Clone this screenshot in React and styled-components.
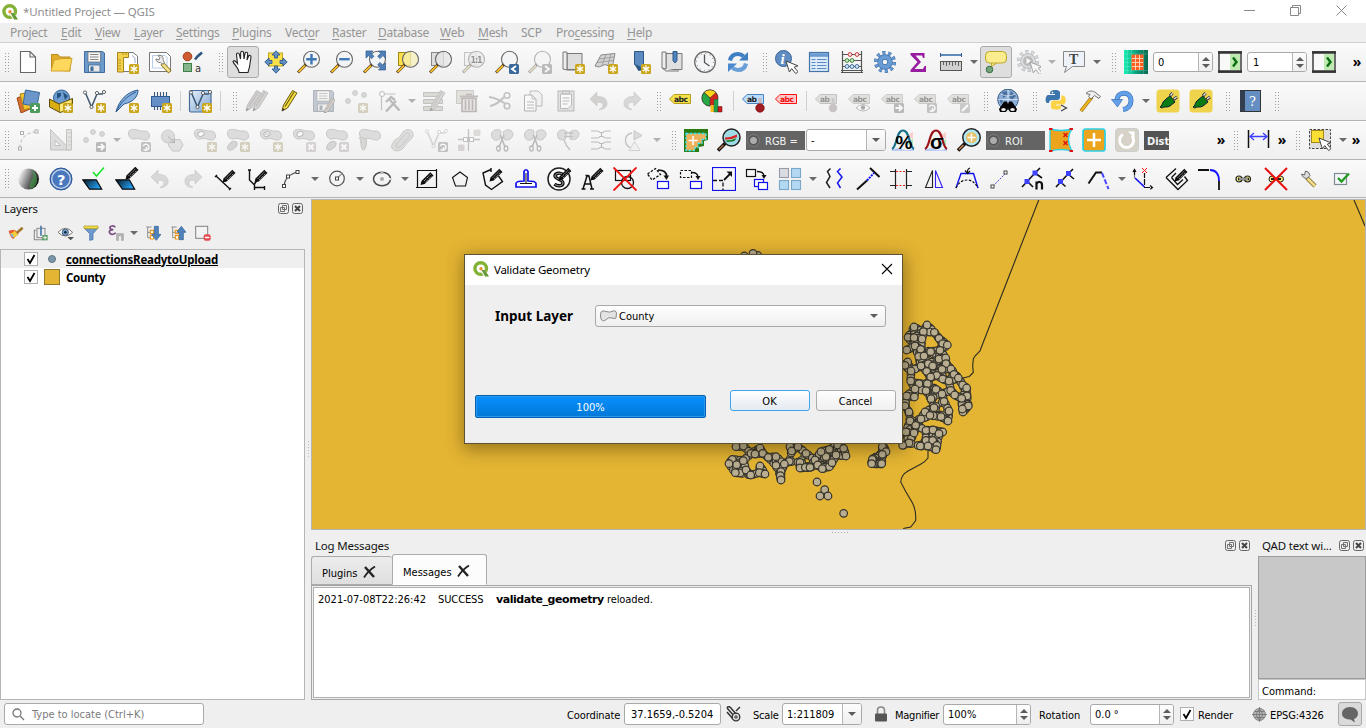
import React from "react";
import styled, { createGlobalStyle, css } from "styled-components";

const GlobalStyle = createGlobalStyle`
  * { box-sizing: border-box; }
  body { margin: 0; background: #efefef; overflow: hidden; }
`;

const ui = `"Noto Sans", "Open Sans", sans-serif`;
const dense = `"DejaVu Sans Condensed", "DejaVu Sans", "Noto Sans", sans-serif`;

const Window = styled.div`
  width: 1366px;
  height: 728px;
  display: flex;
  flex-direction: column;
  background: #efefef;
  font-family: ${ui};
  font-size: 12px;
  color: #000;
  position: relative;
  overflow: hidden;
  white-space: nowrap;
`;

const TitleBar = styled.header`
  height: 23px;
  background: #fff;
  display: flex;
  align-items: center;
  color: #8f8f8f;
  font-size: 11.5px;
  letter-spacing: -0.15px;
`;
const AppIcon = styled.span`
  display: flex;
  width: 16px;
  height: 16px;
  margin: 0 5px 0 2px;
`;
const WindowButtons = styled.div`
  margin-left: auto;
  display: flex;
  width: 122px;
  justify-content: space-between;
  padding: 0 19px 2px 0;
`;

const MenuBar = styled.nav`
  height: 20px;
  display: flex;
  align-items: center;
  padding-left: 10px;
  border-bottom: 1px solid #d0d0d0;
  color: #959595;
  font-size: 12px;
`;
const MenuItem = styled.span`
  width: ${(p) => p.$w}px;
  letter-spacing: -0.27px;
  u { text-underline-offset: 2px; }
`;

const Toolbar = styled.div`
  height: ${(p) => p.$h || 39}px;
  display: flex;
  align-items: center;
  background: linear-gradient(#fafafa, #efefef);
  border-bottom: 1px solid #b4b4b4;
  flex-shrink: 0;
`;
const Tool = styled.span`
  width: ${(p) => p.$w || 33}px;
  height: 32px;
  padding-right: ${(p) => (p.$w ? 0 : 1)}px;
  display: flex;
  align-items: center;
  justify-content: center;
  flex-shrink: 0;
  svg { opacity: ${(p) => (p.$dim ? 0.46 : 1)}; filter: ${(p) => (p.$dim ? "grayscale(.7)" : "none")}; }
  ${(p) =>
    p.$on &&
    css`
      border: 1px solid #aaa;
      border-radius: 3px;
      background: #dedede;
      width: 32px;
      padding: 0;
      margin-right: 1px;
    `}
`;
const Grip = styled.span`
  width: ${(p) => p.$w || 12}px;
  padding-left: ${(p) => p.$l || 5}px;
  flex-shrink: 0;
  display: flex;
`;
const GripDots = styled.i`
  width: 4px;
  height: 19px;
  background: radial-gradient(circle at 0.5px 0.5px, #9f9f9f 0.55px, transparent 0.6px) 0 0 / 3px 3px;
`;
const Divider = styled.i`
  width: 1px;
  height: 20px;
  background: #cfcfcf;
  margin: 0 3px;
  flex-shrink: 0;
`;
const Drop = styled.span`
  width: 12px;
  display: flex;
  justify-content: center;
  flex-shrink: 0;
  &::after {
    content: "";
    border: 4px solid transparent;
    border-top-color: ${(p) => (p.$dim ? "#b0b0b0" : "#6a6a6a")};
    border-bottom: 0;
  }
`;
const More = styled.span`
  width: ${(p) => p.$w}px;
  padding-left: ${(p) => p.$l || 0}px;
  text-align: center;
  font: bold 14px ${ui};
  line-height: 16px;
  flex-shrink: 0;
`;
const Gap = styled.span`
  width: ${(p) => p.$w}px;
  flex-shrink: 0;
`;

const Field = styled.div`
  width: ${(p) => p.$w}px;
  height: ${(p) => p.$h || 20}px;
  margin-right: ${(p) => p.$mr || 0}px;
  border: 1px solid #a9a9a9;
  border-radius: 3px;
  background: #fff;
  display: flex;
  align-items: center;
  justify-content: space-between;
  padding-left: ${(p) => p.$pl || 4}px;
  font: 11px ${dense};
  flex-shrink: 0;
  overflow: hidden;
`;
const FieldText = styled.span`
  padding-top: 1px;
`;
const Spin = styled.span`
  width: 14px;
  height: 100%;
  border-left: 1px solid #b5b5b5;
  background: linear-gradient(#fdfdfd, #eee);
  display: flex;
  flex-direction: column;
  justify-content: center;
  align-items: center;
  gap: 3px;
  &::before, &::after { content: ""; border: 4px solid transparent; }
  &::before { border-bottom: 4px solid #5c5c5c; border-top: 0; }
  &::after { border-top: 4px solid #5c5c5c; border-bottom: 0; }
`;
const Arrow = styled.span`
  width: ${(p) => p.$w || 19}px;
  height: 100%;
  border-left: ${(p) => (p.$plain ? "0" : "1px solid #b5b5b5")};
  background: ${(p) => (p.$plain ? "none" : "linear-gradient(#fdfdfd,#eee)")};
  display: flex;
  align-items: center;
  justify-content: center;
  &::after { content: ""; border: 4px solid transparent; border-top: 4px solid #5c5c5c; border-bottom: 0; }
`;
const DarkLabel = styled.span`
  width: ${(p) => p.$w}px;
  height: 19px;
  margin-right: ${(p) => p.$mr || 0}px;
  background: ${(p) => (p.$bold ? "#545454" : "#646464")};
  color: #f4f4f4;
  display: flex;
  align-items: center;
  gap: 5px;
  padding: 2px 0 0 ${(p) => (p.$bold ? 3 : 1)}px;
  font: ${(p) => (p.$bold ? "bold 11px" : "11px")} ${dense};
  overflow: hidden;
  flex-shrink: 0;
`;
const Bullet = styled.i`
  width: 13px;
  height: 13px;
  margin-bottom: 2px;
  border-radius: 50%;
  border: 1px solid #7e7e7e;
  background: radial-gradient(circle, #acacac 3px, #585858 4px);
`;

const Workspace = styled.main`
  height: 502px;
  display: flex;
`;
const LayersDock = styled.section`
  width: 305px;
  display: flex;
  flex-direction: column;
`;
const DockTitle = styled.div`
  height: ${(p) => p.$h || 21}px;
  padding: 0 0 ${(p) => p.$pb || 0}px 4px;
  display: flex;
  align-items: center;
  justify-content: space-between;
  font-size: 11.5px;
  letter-spacing: -0.2px;
  color: #111;
`;
const DockButtons = styled.span`
  display: flex;
  gap: 3px;
  padding-right: ${(p) => p.$r || 0}px;
`;
const LayerTools = styled.div`
  height: 30px;
  display: flex;
  align-items: center;
  padding: 0 0 2px 3px;
`;
const Tree = styled.div`
  flex: 1;
  border: 1px solid #b5b5b5;
  background: #fff;
`;
const TreeRow = styled.div`
  height: 18px;
  display: flex;
  align-items: center;
  padding-left: 23px;
  background: ${(p) => (p.$hot ? "#efefef" : "#fff")};
  font: bold 11.5px ${ui};
  letter-spacing: ${(p) => p.$ls}px;
  text-decoration: ${(p) => (p.$hot ? "underline" : "none")};
`;
const Check = styled.span`
  width: 14px;
  height: 14px;
  border: 1px solid #b0b0b0;
  background: #fff;
  display: flex;
  align-items: center;
  justify-content: center;
  flex-shrink: 0;
`;
const Symbol = styled.span`
  width: 28px;
  display: flex;
  justify-content: center;
`;
const Swatch = styled.i`
  width: 16px;
  height: 16px;
  background: #e4b533;
  border: 1px solid #93792e;
`;
const PointMark = styled.i`
  width: 8px;
  height: 8px;
  border-radius: 50%;
  background: #7b98a8;
  border: 1px solid #5f7683;
`;
const Splitter = styled.div`
  width: 6px;
  display: flex;
  align-items: center;
  justify-content: center;
  &::after { content: ""; width: 1px; height: 17px; background: repeating-linear-gradient(#bbb 0 1px, transparent 1px 3px); }
`;
const Center = styled.div`
  flex: 1;
  display: flex;
  flex-direction: column;
  padding-top: 1px;
`;
const MapPane = styled.div`
  height: 331px;
  border: 1px solid #b5b5b5;
  background: #e4b533;
  svg { display: block; }
`;
const HSplit = styled.div`
  height: 6px;
  display: flex;
  justify-content: center;
  padding: 2px 0 0 3px;
  &::after { content: ""; width: 17px; height: 1px; background: repeating-linear-gradient(90deg, #aaa 0 1px, transparent 1px 3px); }
`;
const BottomDocks = styled.div`
  flex: 1;
  display: flex;
`;
const LogDock = styled.section`
  width: 941px;
  display: flex;
  flex-direction: column;
`;
const Tabs = styled.div`
  height: 30px;
  display: flex;
  align-items: flex-end;
  font: 11px ${dense};
`;
const Tab = styled.span`
  width: ${(p) => p.$w}px;
  height: ${(p) => (p.$active ? 31 : 29)}px;
  border: 1px solid #ababab;
  border-bottom-color: ${(p) => (p.$active ? "#fff" : "#ababab")};
  border-right-width: ${(p) => (p.$active ? 1 : 0)}px;
  border-radius: 3px 3px 0 0;
  background: ${(p) => (p.$active ? "#fcfcfc" : "linear-gradient(#ececec,#dfdfdf)")};
  display: flex;
  align-items: center;
  justify-content: space-between;
  padding: 5px 16px 0 10px;
  svg { margin-bottom: 3px; }
`;
const LogBox = styled.div`
  flex: 1;
  border: 1px solid #a5a5a5;
  padding: 1px;
`;
const LogInner = styled.div`
  height: 100%;
  border: 1px solid #b0b0b0;
  background: #fff;
  padding: 5px 4px;
  font: 11px ${dense};
  display: flex;
  align-items: flex-start;
`;
const LogPart = styled.span`
  width: ${(p) => p.$w}px;
  letter-spacing: ${(p) => p.$ls || 0}px;
  ${(p) => p.$bold && css`font-family: "DejaVu Sans", sans-serif; font-weight: 700;`}
`;
const QadDock = styled.section`
  width: 108px;
  display: flex;
  flex-direction: column;
`;
const QadOutput = styled.div`
  height: 123px;
  background: #c8c8c8;
  border: 1px solid #9c9c9c;
`;
const QadInput = styled.div`
  flex: 1;
  background: #fff;
  border: 1px solid #c6c6c6;
  font: 11px ${dense};
  padding: 5px 3px 0;
`;

const StatusBar = styled.footer`
  height: 28px;
  display: flex;
  align-items: center;
  padding-left: 4px;
  font: 11px ${dense};
`;
const StatusCell = styled.span`
  width: ${(p) => p.$w}px;
  display: flex;
  align-items: center;
  flex-shrink: 0;
  padding-top: 2px;
  letter-spacing: ${(p) => p.$ls || 0}px;
  svg { margin-bottom: 2px; }
`;
const Locator = styled(Field)`
  justify-content: flex-start;
  gap: 7px;
  color: #7b7b7b;
  padding-left: 7px;
`;
const Bubble = styled.span`
  width: 24px;
  height: 24px;
  border: 1px solid #a8a8a8;
  border-radius: 3px;
  background: #dadada;
  display: flex;
  align-items: center;
  justify-content: center;
`;

const Dialog = styled.div`
  position: absolute;
  left: 464px;
  top: 254px;
  width: 439px;
  height: 190px;
  border: 1px solid #5d5233;
  background: #efefef;
  box-shadow: 1px 4px 16px 2px rgba(50, 35, 0, 0.42);
`;
const DialogTitle = styled.div`
  height: 30px;
  background: #fff;
  display: flex;
  align-items: center;
  justify-content: space-between;
  padding: 0 9px 2px 8px;
  font-size: 11.5px;
  letter-spacing: -0.25px;
`;
const DialogCaption = styled.span`
  display: flex;
  align-items: center;
  gap: 5px;
`;
const DialogRow = styled.div`
  display: flex;
  align-items: center;
  padding: 20px 0 0 30px;
`;
const InputLabel = styled.b`
  width: 100px;
  font: bold 13.5px ${ui};
`;
const LayerCombo = styled(Field)`
  background: linear-gradient(#fefefe, #efefef);
`;
const ComboValue = styled.span`
  display: flex;
  align-items: center;
  gap: 2px;
`;
const DialogFooter = styled.div`
  display: flex;
  align-items: flex-start;
  padding: 63px 0 0 10px;
  font: 11px ${dense};
`;
const Progress = styled.div`
  width: 231px;
  height: 23px;
  margin: 5px 24px 0 0;
  padding-top: 2px;
  border: 1px solid #0560ae;
  border-radius: 2px;
  background: linear-gradient(#0a90ff, #0078d7);
  box-shadow: inset 0 0 0 1px #2c98f0;
  color: #fff;
  display: flex;
  align-items: center;
  justify-content: center;
`;
const Button = styled.button`
  width: 80px;
  height: 21px;
  margin-right: 6px;
  padding: 2px 1px 0 0;
  border: 1px solid ${(p) => (p.$primary ? "#3ea4ee" : "#acacac")};
  border-radius: 3px;
  background: linear-gradient(#fefefe, ${(p) => (p.$primary ? "#e3eaf1" : "#efefef")});
  font: inherit;
`;

/* ---------- icon building blocks ---------- */
const Svg = ({ s = 24, v = 24, children }) => (
  <svg width={s} height={s} viewBox={`0 0 ${v} ${v}`} fill="none">{children}</svg>
);
const Badge = ({ c = "#c9a61c", x = 14, y = 14, children }) => (
  <g transform={`translate(${x} ${y})`}>
    <rect width="10" height="10" rx="1.5" fill={c} />
    {children || <path d="M5 1.3v7.4M1.8 3.1l6.4 3.8M8.2 3.1L1.8 6.9" stroke="#fff" strokeWidth="1.3" />}
  </g>
);
const ArrowBadge = () => <Badge c="#777"><path d="M1.5 5h6M5 2l3 3-3 3" stroke="#fff" strokeWidth="1.8" /></Badge>;
const TurnBadge = () => <Badge c="#888"><path d="M3 7.5A3 3 0 1 0 2.2 4M2.5 8h3V5" stroke="#fff" strokeWidth="1.5" /></Badge>;
const CrossBadge = () => <Badge c="#c9a2aa"><path d="M2.5 2.5l5 5M7.5 2.5l-5 5" stroke="#fff" strokeWidth="2" /></Badge>;
const Lens = ({ cx = 14.5, cy = 9.2, fill = "#f1f3f5" }) => (
  <g>
    <circle cx={cx} cy={cy} r="8" fill={fill} fillOpacity=".75" stroke="#666" strokeWidth="1.1" />
    <path d="M8.8 14.8L1 22.5" stroke="#4a3a1a" strokeWidth="3" />
    <path d="M8 15.7L1.6 22" stroke="#f8c12d" strokeWidth="1.8" />
  </g>
);
const Blob = () => (
  <path d="M1.5 6C1 2 4 1 8 1.5s6 2 9 1.5 5.500 1.500 5.500 5-3 5-7 3.500-5.500-1-8.500-.5S2 9 1.500 6z" fill="#b9c0b9" stroke="#909090" strokeWidth="1" />
);
const Hole = () => <ellipse cx="8" cy="6" rx="3.2" ry="2.3" transform="rotate(-20 8 6)" fill="#fff" stroke="#777" />;
const Tear = () => <path d="M1.5 20c1-5 5-8 9-6 2 2-1 6-4 7.5s-5 .5-5-1.5z" fill="#aeb5ae" stroke="#888" />;
const Tag = ({ fill = "#f3e04b", stroke = "#b69d1d", color = "#222", t = "abc" }) => (
  <g>
    <path d="M1.5 10L6 5.5h16.500v9H6z" fill={fill} stroke={stroke} />
    <text x="6" y="12.8" fontFamily="DejaVu Sans" fontWeight="700" fontSize="7.6" fill={color} textLength={t === "abc" ? 14 : 10}>{t}</text>
  </g>
);
const Vee = ({ c = "#3f5870", o = "#555" }) => (
  <g>
    <path d="M3.5 4L9.5 18 15 5h6" stroke={c} strokeWidth="1.5" />
    {[[3, 3.5], [9.5, 18], [15, 4], [22, 3]].map(([x, y]) => <circle key={x} cx={x} cy={y} r="1.6" fill="#fff" stroke={o} strokeWidth=".9" />)}
  </g>
);
const Dots = () => (
  <g fill="#b9b9b9" stroke="#909090">
    <circle cx="4" cy="12" r="2.4" /><circle cx="11" cy="4" r="2.4" /><circle cx="20" cy="6" r="2.4" />
  </g>
);
const Pen = ({ x = 0, y = 0, k = 1, a = "#f3dc3e", b = "#6b5a14" }) => (
  <g transform={`translate(${x} ${y}) scale(${k})`}>
    <path d="M4 22l1.5-6L14.5 1.500l4.500 2.500L9.500 19z" fill={a} stroke={b} strokeWidth="1" />
    <path d="M4 22l.8-3 2.2 1.500z" fill="#333" /><path d="M7 17.500L16 3" stroke={b} strokeWidth="1.1" />
  </g>
);
const InkPen = ({ x = 11, y = 1 }) => (
  <g transform={`translate(${x} ${y})`}>
    <path d="M-.5 12.500l1-4 8.800-8.800 3.200 3.200L3.700 11.500z" fill="#0c0c0c" />
    <path d="M2.800 8.600l6.800-6.800M4.400 9.800l6.400-6.400" stroke="#fff" strokeWidth=".8" strokeDasharray="1.2 1" />
  </g>
);
const Disk = () => (
  <g>
    <path d="M2.500 1.500h18L22.500 3v19.500h-20z" fill="#6b9bcd" stroke="#3f6d9d" />
    <rect x="6" y="2" width="12.500" height="10" fill="#f7f7f7" stroke="#666" strokeWidth=".7" />
    <path d="M8 4.500h8.500M8 7h8.500M8 9.500h8.500" stroke="#888" strokeWidth="1" />
    <rect x="6.500" y="15" width="11.500" height="7" fill="#e9e9e9" stroke="#446a92" strokeWidth=".8" />
    <rect x="8.500" y="16.500" width="3" height="4.500" fill="#3f6d9d" />
  </g>
);
const Hook = ({ flip, c = "#b2b8b0" }) => (
  <g transform={flip ? "translate(24 0) scale(-1 1)" : undefined}>
    <path d="M3 10l7-7v4.500c7 0 10 2.500 10 7 0 3.500-3 6-8 6 2.500-1 4-2.500 4-4.500 0-2-2-3-6-2.500V17z" fill={c} stroke="#999" strokeWidth=".8" />
  </g>
);
const Node = ({ x, y }) => <rect x={x - 1.5} y={y - 1.5} width="3" height="3" fill="#fff" stroke="#444" strokeWidth="1" />;
const Gear = ({ c = "#6a9bd3" }) => (
  <g>
    <circle cx="12" cy="12" r="9" stroke="#3f70aa" strokeWidth="4.2" strokeDasharray="3 2.654" />
    <circle cx="12" cy="12" r="8.8" stroke={c} strokeWidth="3.4" strokeDasharray="2.2 3.329" strokeDashoffset="-.4" />
    <circle cx="12" cy="12" r="5" stroke="#3f70aa" strokeWidth="5.4" /><circle cx="12" cy="12" r="5" stroke={c} strokeWidth="4.2" />
  </g>
);
const Cursor = ({ x = 11, y = 10 }) => (
  <path transform={`translate(${x} ${y})`} d="M0 0l3.400 11 2.300-3.400 4 5 2.300-2-3.800-4.400 3.700-1.400z" fill="#fff" stroke="#444" />
);
const Slab = () => (
  <g>
    <defs><linearGradient id="slab" x1="0" y1="0" x2="1" y2=".5"><stop offset=".1" stopColor="#0a2438" /><stop offset="1" stopColor="#23a0f2" /></linearGradient></defs>
    <path d="M.8 12.800h13.500l5.400 9.400H7.500z" fill="url(#slab)" stroke="#0a0a0a" strokeWidth="1.2" />
  </g>
);
const Hist = ({ c, t }) => (
  <g>
    <path d="M3 20C7 20 6 3 12 3s6 15 10 18z" fill="#eef4f0" />
    <path d="M14 16l8-5v6z" fill="#a8e8b8" /><path d="M15 8l7-4v7z" fill="#fbd0cc" /><path d="M0 23q6-5 11-2t12-1v3z" fill="#b9cdfb" />
    <path d="M1 21C6 19 5 2.500 12 2.500S18 19 23 21" stroke={c} strokeWidth="2.2" />
    <text x={t === "%" ? 4.5 : 6} y="21" fontFamily="Liberation Sans" fontWeight="700" fontSize={t === "%" ? 19 : 20} fill="#000">{t}</text>
  </g>
);
const Plug = () => (
  <g>
    <rect x=".5" y=".5" width="23" height="23" rx="3.5" fill="#efd34d" />
    <path d="M4 18c2-1 2-3 3-5l3-3 4-3 5 6-5 4c-3 2-6 0-8 2z" fill="#0a7a12" stroke="#123" />
    <path d="M14 7l2.500-3M17.500 10.500L21 8" stroke="#333" strokeWidth="3" /><path d="M14.500 6.500l2-2.300M18 10l2.600-1.900" stroke="#ddd" strokeWidth="1.5" />
  </g>
);
const Land = () => (
  <g>
    <rect x="1" y="2" width="22" height="20" fill="#f8f8f8" stroke="#333" strokeWidth="1.4" />
    <path d="M0 2.500h24M0 21.500h24" stroke="#333" strokeWidth="2.6" />
    <rect x="12" y="4" width="10" height="16" fill="#bfe9b0" /><path d="M15 7.500l3.500 4.500-3.500 4.500" stroke="#0a6e12" strokeWidth="2.4" />
  </g>
);

const icons = {
  new: <path d="M4.500 1.500H14l5.500 5.500v15.500h-15zM14 1.500V7h5.500" fill="#fff" stroke="#666" strokeWidth="1.1" />,
  open: <g><path d="M2.500 20V4.500H9l2 2.500h10v14z" fill="#e0ae2c" stroke="#b98c1b" /><path d="M2 21L5 10l8-1.500h10L20.500 21z" fill="#fed75d" stroke="#d2a028" /></g>,
  save: <Disk />,
  layout: <g><path d="M3.500 2.500H18l4.500 3.500v15.500h-19z" fill="#fff" stroke="#777" /><path d="M2.500 2.500h11v5h-5V22h-6z" fill="#f3d24b" stroke="#a8841a" /><path d="M8 3v2M11 3v2M3.500 10h2.500M3.500 13h2.500M3.500 16h2.500M3.500 19h2.500" stroke="#a8841a" strokeWidth=".9" /><path d="M17 5.500l3 2.500v5" stroke="#9ac" /><Badge /></g>,
  layouts: <g><path d="M1.500 2.500h17l4 4v15h-21z" fill="#fff" stroke="#777" /><path d="M4.500 5.500H17l2 2V18H4.500z" stroke="#b8cdea" /><path d="M14 13.500l8 8.500" stroke="#8a6d14" strokeWidth="4.2" /><path d="M14.500 14l7 7.500" stroke="#f3e08a" strokeWidth="2.6" /><path d="M10 5.500c3-1 5.500 1 5 4 .5 2 2 3 1 4s-2.500 0-3.500-1C10 13 8 11 8 9l3 .8 1-2z" fill="#eee" stroke="#777" /></g>,
  style: <g><circle cx="6.500" cy="6.500" r="4.300" fill="#cf5b31" stroke="#9d3d1d" /><rect x="2.500" y="13.500" width="8" height="8" fill="#86b58c" stroke="#3c8048" /><path d="M14 9.500l2.500-3L21 2.500" stroke="#2f5680" strokeWidth="2.600" /><text x="14" y="21.500" fontSize="10" fontFamily="DejaVu Sans" fill="#333">a</text></g>,
  hand: <path d="M8 22.500c0-4-5-8-6-11 1-2 3 0 4.500 2L5.500 4.500c0-2 2.400-2 2.900 0L9.500 9 9.700 2.700c0-2 2.800-2 2.900 0L13 9l1-5.500c.3-2 2.900-1.500 2.700.5L16 10l1.500-3.700c.6-1.600 2.700-1 2.500.7L18.500 17 17 22.500z" fill="#fff" stroke="#222" strokeWidth="1.100" />,
  pan: <g><rect x="4.500" y="3" width="14" height="13" fill="#fbe04a" stroke="#c1a41c" /><path d="M12 .8l4 4.200h-2.500v3h-3V5H8zM23.200 12L19 16v-2.500h-3v-3h3V8zM12 23.200L8 19h2.500v-3h3v3H16zM.8 12L5 8v2.500h3v3H5V16z" fill="#6490c4" stroke="#2e5a8f" strokeWidth=".9" /></g>,
  zin: <g><Lens /><path d="M14.500 4v10.500M9.200 9.200h10.500" stroke="#3f78b5" strokeWidth="2.400" /></g>,
  zout: <g><Lens /><path d="M9.200 9.200h10.500" stroke="#3f78b5" strokeWidth="2.400" /></g>,
  zfull: <g><Lens /><path d="M3 1h7L8 3.300l3 3-2.300 2.300-3-3L3 8zM22.500 1h-7l2.200 2.300-3 3L17 8.600l3-3L22.500 8zM22.500 20h-7l2.200-2.300-3-3 2.300-2.300 3 3 2.500-2.400z" fill="#4f80b9" stroke="#2e5a8f" strokeWidth=".7" /></g>,
  zsel: <g><rect x="2.500" y="2.500" width="12" height="13" fill="#fbe04a" stroke="#a08613" /><Lens fill="#f6efb8" /></g>,
  zlay: <g><rect x="2.500" y="2.500" width="12" height="13" fill="#ddd" stroke="#888" /><Lens fill="#e6e6e6" /></g>,
  zone: <g><rect x="2.500" y="2.500" width="12" height="13" fill="#eee" stroke="#888" /><Lens fill="#ddd" /><text x="8.500" y="12.500" fontSize="8" fontFamily="DejaVu Sans" fontWeight="700" fill="#222" textLength="12">1:1</text></g>,
  zlast: <g><Lens /><Badge c="#38689c"><path d="M7 2L3 5l4 3" stroke="#fff" strokeWidth="1.900" /></Badge></g>,
  znext: <g><Lens /><Badge c="#777"><path d="M3 2l4 3-4 3" stroke="#fff" strokeWidth="1.900" /></Badge></g>,
  newmap: <g><path d="M6 3.500h15v16H6z" fill="#ddd" stroke="#777" /><path d="M2 2h4v18l-4-1zM6 20h9" fill="#eee" stroke="#777" /><Badge /></g>,
  new3d: <g><path d="M1 16L7 5l14-1.500-2 10-3 3-5-2-6 2.500z" fill="#d5d5d5" stroke="#888" /><path d="M5 9l15-2M3 12.500l16-2M12 4.500L8 15M17 4l-3 11" stroke="#999" strokeWidth=".9" /><Badge /></g>,
  bookm: <g><path d="M7.500 1.500h9v18l-4-3-5-2z" fill="#5c8bc2" stroke="#2d5787" /><path d="M7.500 14.500l5 2 4 3.500-5 1z" fill="#2d5787" /><Badge /></g>,
  books: <g><path d="M6 3.500h16v16H6z" fill="#e0e0e0" stroke="#777" /><path d="M2 2h4v17l-4-1zM2 18l4 3h13" fill="#eee" stroke="#777" /><path d="M13 1.500h4v9l-2 2.500-2-2.500z" fill="#4f83bd" stroke="#2d5787" /></g>,
  clock: <g><circle cx="12" cy="12" r="10.300" fill="#f4f5f6" stroke="#666" strokeWidth="1.200" /><circle cx="12" cy="12" r="8.500" stroke="#777" strokeDasharray="1 3.450" /><path d="M11.500 4.500v8l5 3.500" stroke="#555" strokeWidth="1.300" /></g>,
  refresh: <g><path d="M4 10.500C5 6 8 4 12 4c2.500 0 4 .8 5.500 2.200" stroke="#3f7fc4" strokeWidth="4.200" /><path d="M22 2v8.500h-9z" fill="#3f7fc4" /><path d="M20 13.500c-1 4.500-4 6.500-8 6.500-2.500 0-4-.8-5.500-2.200" stroke="#6b9fd8" strokeWidth="4.200" /><path d="M2 22v-8.500h9z" fill="#4b89cc" /></g>,
  info: <g><circle cx="9.500" cy="8.500" r="8" fill="#5f8dc3" stroke="#3b6696" /><text x="6.500" y="13.500" fontFamily="Liberation Serif" fontWeight="700" fontStyle="italic" fontSize="15" fill="#fff">i</text><Cursor x={12} y={11} /></g>,
  table: <g><rect x="2.500" y="2.500" width="19" height="19" fill="#dcebfb" stroke="#4474a8" strokeWidth="1.200" /><path d="M3 5h18" stroke="#6a9bd0" strokeWidth="3.600" /><path d="M4.500 9.500h4M4.500 12.500h4M4.500 15.500h4M4.500 18.500h4M10 9.500h9.500M10 12.500h9.500M10 15.500h9.500M10 18.500h9.500" stroke="#5b8bc0" strokeWidth="1.100" /></g>,
  abacus: <g><path d="M2.500 1v21M21.500 1v21M2.500 4.500h19M2.500 10.500h19M2.500 16.500h19M1 22.500h22M1 20.500h22" stroke="#555" strokeWidth="1.200" /><g fill="#eee" stroke="#c33"><circle cx="10" cy="4.500" r="1.900" /><circle cx="17" cy="4.500" r="1.900" /></g><g fill="#cfe6c9" stroke="#3a8a3a"><circle cx="7" cy="10.500" r="1.900" /><circle cx="12" cy="10.500" r="1.900" /></g><g fill="#dcebfb" stroke="#37699f"><circle cx="7" cy="16.500" r="1.900" /><circle cx="12" cy="16.500" r="1.900" /><circle cx="17" cy="16.500" r="1.900" /></g></g>,
  gear: <Gear />,
  sigma: <path d="M4.500 3h14v5h-1.500L16 5.500H9.500L15 12l-6.500 7H17l1.500-3H20v6H4.500v-2l7-8-7-7z" fill="#981ca0" />,
  ruler: <g><path d="M1.500 5h21" stroke="#4f7fb5" strokeWidth="1.800" /><path d="M1.500 3v4M22.500 3v4" stroke="#345d8b" /><rect x="1.500" y="11.500" width="21" height="9" fill="#d0d0d0" stroke="#555" /><path d="M4.500 11v4M7.500 11v5M10.500 11v4M13.500 11v5M16.500 11v4M19.500 11v5" stroke="#555" strokeWidth=".9" /></g>,
  tip: <g><path d="M8 12l-1 5 7-5" fill="#fbec8e" stroke="#bda52b" /><rect x="1.500" y="1.500" width="21" height="11.500" rx="4" fill="#fbec8e" stroke="#bda52b" /><circle cx="5.500" cy="19.500" r="3.300" fill="#74a37a" stroke="#3b7145" /></g>,
  gearplay: <g transform="translate(-1 -1)"><Gear c="#bbb" /><circle cx="12" cy="12" r="5.500" fill="#777" stroke="#ccc" /><path d="M10.500 9l4.500 3-4.500 3z" fill="#fff" /><Cursor x={14} y={13} /></g>,
  textann: <g><path d="M1.500 1.500h21v15h-12l-8 6 2-6h-3z" fill="#eef3f9" stroke="#888" /><text x="7" y="13.500" fontFamily="Liberation Serif" fontWeight="700" fontSize="14" fill="#444">T</text></g>,
  raster: <g><defs><linearGradient id="rst"><stop stopColor="#12f0b4" /><stop offset=".6" stopColor="#0d9474" /><stop offset="1" stopColor="#096a50" /></linearGradient></defs><rect width="24" height="24" fill="url(#rst)" /><rect x="7.500" y="4.500" width="12" height="15.500" fill="#ff5f1f" /><path d="M8 8.500h11M8 12.500h11M8 16.500h11M11.500 5v15M15.500 5v15" stroke="#ffd9c4" strokeWidth=".9" /><path d="M0 4h24M0 20.500h24M3.500 0v24M7.500 0v24M19.500 0v24M0 8.500h7M0 12.500h7M0 16.500h7" stroke="#fff" strokeOpacity=".2" strokeWidth=".8" /></g>,
  land: <Land />,

  addlayer: <g><path d="M1 9l8-3 5 14-9 4z" fill="#d9702f" stroke="#9c4718" /><path d="M4 5l10-2 4 15-10 3z" fill="#f2c230" stroke="#aa8418" /><path d="M9.500 1l14 2.500-2.500 14L7 15z" fill="#6a96c9" stroke="#3b689a" /><Badge c="#4e9a5c"><path d="M5 2v6M2 5h6" stroke="#fff" strokeWidth="1.800" /></Badge></g>,
  gpkg: <g><circle cx="12.500" cy="9" r="8" fill="#6d9cd0" stroke="#35628f" /><path d="M8 4l4 0 0 3-4 3zM14 3l5 4-3 4z" fill="#24517f" /><path d="M.500 10l9.500 5 13.500-5.500V19L11 23.500.500 18z" fill="#d8ae12" stroke="#5d4a08" /><path d="M10.500 15l12.500-5v9l-12.500 4.500z" fill="#fbe97a" stroke="#7c620a" strokeWidth=".7" /><Badge /></g>,
  vee: <g><Vee /><Badge /></g>,
  feather: <g><path d="M1 23C4 11 12 3 23 1c0 7-5 12-14 14z" fill="#86b1de" stroke="#2f5d90" /><path d="M1 23C6 13 12 7 21 3" stroke="#2f5d90" /><Badge /></g>,
  chip: <g><path d="M6.500 3v18M9.500 3v18M12.500 3v18M15.500 3v18M18.500 3v18" stroke="#3b5b7c" strokeWidth="1.100" /><rect x="3.500" y="7.500" width="18" height="10" fill="#6490c7" stroke="#2e5a8f" /><Badge /></g>,
  veebox: <g><defs><linearGradient id="vb" x2="1" y2="1"><stop stopColor="#e9f1fa" /><stop offset="1" stopColor="#7ba2d0" /></linearGradient></defs><rect x="1.500" y="1.500" width="21.500" height="21.500" rx="1.500" fill="url(#vb)" stroke="#456d99" strokeWidth="1.200" /><Vee c="#3b5878" /><Badge /></g>,
  pens: <g><Pen x={-3} a="#b3a49e" b="#857b78" /><Pen x={4} a="#b9a9a3" b="#857b78" /></g>,
  pen: <Pen />,
  savepen: <g><Disk /><Pen x={10} y={8} k={0.75} a="#ca9" /></g>,
  dotstar: <g><Dots /><Badge /></g>,
  vertex: <g><path d="M4.500 21V5h14" stroke="#888" strokeWidth="1.200" /><circle cx="5" cy="5" r="2.500" fill="#fff" stroke="#777" /><path d="M9 13l5-5 4 3M12.500 10.500l10 11M19 12L9 22.500" stroke="#777" strokeWidth="2.400" /></g>,
  rowspen: <g><path d="M1.500 3.500h19v4h-19zM1.500 10.500h19v4h-19zM1.500 17.500h19v4h-19z" fill="#c2ba92" stroke="#888" /><Pen x={4} a="#caa" b="#888" /></g>,
  trash: <g><rect x="1.500" y="1.500" width="17" height="13" fill="#d2c8a4" stroke="#998" /><path d="M5 7.500h18" stroke="#977" strokeWidth="2" /><path d="M7 9.500h14v13H7z" fill="#e4cccc" stroke="#966" strokeWidth="1.600" /><path d="M11 5.500h6M10.500 11v10M14 11v10M17.500 11v10" stroke="#966" strokeWidth="1.500" /></g>,
  cut: <g><path d="M1 8q8 1 16 6.500M2 17q7-1 14-9" stroke="#888" strokeWidth="2" /><circle cx="19" cy="6.500" r="2.800" stroke="#888" strokeWidth="1.600" /><circle cx="19" cy="17" r="2.800" stroke="#888" strokeWidth="1.600" /></g>,
  copy: <g><path d="M9 2h8l4 4v11H9z" fill="#eee" stroke="#777" /><path d="M3.500 6H11l4 4v12H3.500z" fill="#fff" stroke="#666" /><path d="M11 6v4h4M6 13h7M6 16h7M6 19h7" stroke="#777" /></g>,
  paste: <g><rect x="4" y="2" width="16" height="20" fill="#ccc" stroke="#777" /><path d="M6.500 5h11v11l-3.500 3.500H6.500z" fill="#fff" stroke="#777" /><path d="M8.500 2h7v3h-7zM8.500 9h7M8.500 12h7M8.500 15h5" stroke="#777" /></g>,
  undo: <Hook c="#b6a79d" />,
  redo: <Hook flip />,
  undo2: <Hook />,
  abc: <Tag />,
  pie: <g><circle cx="9" cy="9" r="8" fill="#d8231a" stroke="#333" strokeWidth=".8" /><path d="M9 9L3 3.500C6 0 12 0 15 3.500z" fill="#fbd51d" stroke="#333" strokeWidth=".6" /><path d="M9 9L3 3.500C-1 8 1 17 9 17z" fill="#28a745" stroke="#333" strokeWidth=".6" /><path d="M9.500 16h3.500v7H9.500z" fill="#fbbb1d" /><path d="M13 10.500h4V23h-4z" fill="#21a246" stroke="#165" strokeWidth=".5" /><path d="M17 17.500h4V23h-4z" fill="#c81d1d" stroke="#611" strokeWidth=".5" /></g>,
  abpin: <g><Tag fill="#bcdcff" stroke="#4b82c0" t="ab" /><path d="M19 9v9" stroke="#c9b9b9" strokeWidth="3" /><circle cx="19" cy="19" r="4.300" fill="#a11c22" stroke="#71090e" strokeWidth=".6" /></g>,
  abred: <Tag fill="#ffc9c9" stroke="#f11" color="#e11" />,
  abpin2: <g><Tag fill="#cdc8a8" stroke="#888" t="ab" /><path d="M19 9v9" stroke="#999" strokeWidth="3" /><circle cx="19" cy="19" r="4.200" fill="#a88" /></g>,
  abeye: <g><Tag fill="#cdc8a8" stroke="#999" /><path d="M9 19q7-7 14 0-7 6-14 0z" fill="#fff" stroke="#777" /><circle cx="16" cy="18.500" r="2.200" fill="#555" /></g>,
  abmove: <g><Tag fill="#cdc8a8" stroke="#999" /><ArrowBadge /></g>,
  abturn: <g><Tag fill="#cdc8a8" stroke="#999" /><TurnBadge /></g>,
  abedit: <g><Tag fill="#cdc8a8" stroke="#999" /><Badge c="#999"><path d="M2 8l6-6" stroke="#fff" strokeWidth="2.400" /></Badge></g>,
  search: <g><circle cx="12" cy="10.500" r="10.300" fill="#8db0da" stroke="#31587f" /><path d="M6 3l5-1 1 4-5 3zM15 2l5 5-4 4-3-3zM3 9l4 3-2 3z" fill="#4a719c" /><path d="M2 10.500h20M12 1v18M5 5q7 4 14 0" stroke="#dce9f7" strokeWidth=".8" /><path d="M8 12.500h3l1 2.500 1-2.500h3l5 7.500-1 3h-6l-2-3.500-2 3.500H4l-1-3z" fill="#050505" /><ellipse cx="7.500" cy="20.500" rx="2.300" ry="1.500" fill="#eee" /><ellipse cx="16.500" cy="20.500" rx="2.300" ry="1.500" fill="#eee" /></g>,
  python: <g><path d="M10 1c4 0 5 1 5 3v4c0 2-1 3-3 3H7c-2 0-3 1-3 3H2c-2-1-2-7 1-8h7V5H5V4c0-2 2-3 5-3z" fill="#3b75ab" /><circle cx="7.500" cy="3.600" r=".9" fill="#fff" /><path d="M15 6.500h3c4 1 3 8 1 9h-8v1h5v2c0 3-9 3-10 0v-4c0-2 1-3 3-3h5c2 0 3-2 2-5z" fill="#fbd345" /><path d="M16 16l5.500 3-5.500 3" stroke="#444" strokeWidth="1.300" /></g>,
  hammer: <g><path d="M14 8L3 22" stroke="#8c6608" strokeWidth="3.600" /><path d="M14 8L3 22" stroke="#edb421" strokeWidth="2.400" /><path d="M8 4.500c3-3.500 7-3 10-.5l4.500 3.500-1.500 2-4.500-3-3.500 3.500-2.500-2.500 1.500-2z" fill="#eee" stroke="#666" strokeWidth=".9" /></g>,
  turn: <g><path d="M6 11C6 7 9 4.200 13 4.200c4.500 0 7 3.300 7 7.300 0 5-3 8.500-8 9" stroke="#3b72b8" strokeWidth="5" /><path d="M6 11C6 7 9 4.200 13 4.200c4.500 0 7 3.300 7 7.300 0 5-3 8.500-8 9" stroke="#62a0ea" strokeWidth="3.800" /><path d="M.5 10.500h11L6.500 18z" fill="#62a0ea" stroke="#3b72b8" strokeWidth=".7" /></g>,
  plug: <Plug />,
  manual: <g><rect x="2.500" y="1.500" width="20" height="21" fill="#658fc2" stroke="#333" /><path d="M2 1.500h5v21H2z" fill="#333f4e" /><text x="11" y="17" fontFamily="DejaVu Serif" fontSize="13" fill="#fff">?</text></g>,

  arcdash: <g opacity=".85"><path d="M4 20C4 11 9 5 21 3.500" stroke="#888" strokeWidth="1.200" strokeDasharray="3.500 2" /><Node x={4} y={20.500} /><Node x={6} y={5} /><Node x={20.500} y={3.500} /></g>,
  triangle: <g><path d="M1.500 1.500v20.500h20z" fill="#c5c3ba" stroke="#888" /><path d="M6 12.500v5h5.500z" fill="#fff" stroke="#888" /><path d="M17.500 1.500h5V22h-5z" fill="#d8d0b4" stroke="#888" /><path d="M19 5h3M19 9h3M19 13h3M19 17h3" stroke="#888" strokeWidth=".8" /></g>,
  dotmove: <g><Dots /><ArrowBadge /></g>,
  blobturn: <g><Blob /><TurnBadge /></g>,
  merge: <g><circle cx="8" cy="8.500" r="6.500" fill="#b9c0b9" stroke="#909090" /><path d="M8 17l4-5.500h8l3 5.500-3.500 6h-7z" fill="#c8cec8" stroke="#909090" /><path d="M8 8.500l6.500 6M14.500 10.500v4h-4" stroke="#666" /></g>,
  ring: <g><Blob /><Hole /><Badge /></g>,
  part: <g><Blob /><Tear /><Badge /></g>,
  fillr: <g><Blob /><Hole /><ellipse cx="8" cy="6" rx="2.200" ry="1.400" fill="#b9c0b9" /><Badge /></g>,
  ringx: <g><Blob /><Hole /><CrossBadge /></g>,
  partx: <g><Blob /><Tear /><CrossBadge /></g>,
  reshape: <g><Blob /><path d="M1.500 9q5 1 7 2.500 0 10-3 10.500c-3 0-2-8-4-13z" fill="#bcb69c" stroke="#909090" /></g>,
  offset: <g><path d="M2 15c2-5 6-4 8-8s6-7 10-4.500 2 8-2 10.500-3 5-7 8-9 2-10-1 0-3 1-5z" fill="#c9c5ae" stroke="#909090" /><path d="M5 16c2-3 5-4 7-7.500s5-4.500 6-3 1 4-2 6-4 5-6.500 7-4 1.500-4.500 0 0-1.500 0-2.500z" fill="#b9c0b9" stroke="#909090" /></g>,
  vsplit: <g><g opacity=".7"><Vee c="#888" o="#888" /></g><TurnBadge /></g>,
  split4: <g><path d="M11.500 1v22M1 11.500h22" stroke="#888" strokeWidth="1.300" /><rect x="6.500" y="9.500" width="4" height="4" fill="#fff" stroke="#888" /><rect x="12.500" y="9.500" width="4" height="4" fill="#fff" stroke="#888" /><rect x="16.500" y="1.500" width="7" height="6.500" rx="1" fill="#c3bd9d" /><rect x="1" y="16.500" width="6.500" height="6.500" rx="1" fill="#cfa8ae" /></g>,
  cutblob: <g><path d="M11 3C8 0 1 2 1.500 7s4 6.500 8.500 4z" fill="#b9c0b9" stroke="#909090" /><path d="M13 4c4-4 10-2 10 2s-5 8-9 5z" fill="#b9c0b9" stroke="#909090" /><path d="M10.500 7l4.500 12M14 7L9 19" stroke="#777" strokeWidth="1.600" /><ellipse cx="8.500" cy="20.500" rx="1.800" ry="2.500" stroke="#777" strokeWidth="1.300" /><ellipse cx="16" cy="20.500" rx="1.800" ry="2.500" stroke="#777" strokeWidth="1.300" /></g>,
  mergeb: <g><path d="M11 4C8 0 1 2 1.500 7s4 6 8 4z" fill="#b9c0b9" stroke="#909090" /><path d="M14 4c4-3 9-2 9 2s-5 7-9 5z" fill="#b9c0b9" stroke="#909090" /><path d="M8 5h9M8 8.500h9M8 12q2 6 6 10" stroke="#888" strokeWidth="1.300" /></g>,
  lines: <path d="M2 3h6q2 0 3 1.500h3Q15 3 17 3h5M2 10h6q2 0 3-1.500h3Q15 10 17 10h5M2 14h6q2 0 3 1.500h3q1-1.500 3-1.500h5M2 21h6q2 0 3-1.500h3q1 1.500 3 1.500h5M12.500 4v5M12.500 15v5" stroke="#777" strokeWidth="1.200" />,
  rotsym: <g><path d="M9 20C1 17 2 6 10 5" stroke="#888" strokeWidth="1.300" /><path d="M12 2.500l8 5-8 4.500z" fill="#b9c0b9" stroke="#909090" /><path d="M7 22.500l5.500-9 5.500 9z" fill="#eee" stroke="#aaa" /></g>,
  scp: <g><path d="M0 1h24v11l-4 1v5l-5 1v5H0z" fill="#2a7a12" /><path d="M2 5.500h20v6h-4v4h-4v4h-3v3H2z" fill="#efb05c" stroke="#3fe6f4" strokeWidth="1.300" strokeDasharray="2.500 1.500" /><path d="M9 8v9M4.500 12.500h9" stroke="#fff" strokeWidth="1.500" /></g>,
  scplens: <g><circle cx="14.500" cy="9.500" r="8.500" fill="#9fdbe6" stroke="#222" strokeWidth="1.500" /><path d="M8 9.500q6 0 12-3v2.500q-6 3-12 2.500z" fill="#d22" /><path d="M8.500 12.500q6 0 11-2.500l-2 3q-4 1-7.500 1z" fill="#1b7d27" /><path d="M8 15.500l-7 7" stroke="#111" strokeWidth="3.600" /><path d="M6.500 17l-4.500 4.500" stroke="#b87345" strokeWidth="1.300" /></g>,
  histp: <Hist c="#17708a" t="%" />,
  hists: <Hist c="#9a1118" t="σ" />,
  lensplus: <g><circle cx="14.500" cy="9.500" r="8.700" fill="#aeeaf6" stroke="#222" strokeWidth="1.500" /><circle cx="14.500" cy="9.500" r="5.500" fill="#e9c067" /><path d="M14.500 5.500v8M10.500 9.500h8" stroke="#fff" strokeWidth="1.500" /><path d="M8 15.500l-7 7" stroke="#111" strokeWidth="3.600" /><path d="M6.500 17l-4.500 4.500" stroke="#d68a4d" strokeWidth="1.500" /></g>,
  roi: <g><path d="M1 1q11 3 22 0-7 10 0 22-11-3-22 0z" fill="#eba41b" stroke="#2cd0e8" strokeWidth="1.300" /><path d="M0 0h3.500v2H0zM20.500 0H24v2h-3.500zM0 22h3.500v2H0zM20.500 22H24v2h-3.500z" fill="#d11" /><path d="M14.500 5l4 4m0-4l-4 4M14.500 13l4 4m0-4l-4 4" stroke="#d11" strokeWidth="1.400" /></g>,
  plus: <g><rect x="1" y="1" width="22" height="22" rx="2.500" fill="#eba41b" stroke="#2cd0e8" strokeWidth="1.700" /><path d="M12 5v14M5 12h14" stroke="#fff" strokeWidth="2.600" /></g>,
  redoroi: <g><rect x=".5" y=".5" width="23" height="23" rx="3" fill="#d6d2c8" stroke="#c9cfcf" /><path d="M8 6.500A7 7 0 1 0 17 8" stroke="#fff" strokeWidth="2.800" /><path d="M13 3.500h6.500V10z" fill="#fff" /></g>,
  width: <g><path d="M2.500 2v18M22.500 2v18" stroke="#111" strokeWidth="1.500" /><path d="M4 8.500h17M8 5L4 8.500 8 12M17 5l4 3.500-4 3.500" stroke="#3f3fff" strokeWidth="1.300" /></g>,
  select: <g><rect x="1.500" y="1.500" width="21" height="19" fill="#dedede" stroke="#444" strokeDasharray="2.500 1.500" /><rect x="3.500" y="2.500" width="12" height="12" fill="#fbdf35" stroke="#a4881c" /><Cursor /></g>,

  ball: <g><defs><linearGradient id="ball" x1="0" y1=".2" x2="1" y2=".6"><stop offset=".05" stopColor="#fbfbfb" /><stop offset=".55" stopColor="#777" /><stop offset="1" stopColor="#0c0c0c" /></linearGradient></defs><circle cx="12.500" cy="12" r="10.500" fill="url(#ball)" /><path d="M14 2q6 6 1 12-2 4-1 8 8-2 7-11-1-6-7-9z" fill="#48a24f" fillOpacity=".6" /></g>,
  help: <g><circle cx="12" cy="12" r="11" fill="#3c69ae" stroke="#2f5a98" /><circle cx="12" cy="12" r="9.300" fill="#4978be" stroke="#c9d8ee" strokeWidth="1.300" /><text x="8" y="17.500" fontFamily="DejaVu Sans" fontWeight="700" fontSize="14.500" fill="#fff">?</text></g>,
  slabok: <g><Slab /><path d="M11 5l3.500 4L22 .5" stroke="#11e626" strokeWidth="1.500" /></g>,
  slabpen: <g><Slab /><InkPen x={11} y={0} /></g>,
  linepen: <g><path d="M2 9l14 13M1 10l2-2M15 23l2-2" stroke="#111" strokeWidth="1.400" /><InkPen x={9} y={3} /></g>,
  plpen: <g><path d="M2.500 3v10l5 5v5M1 3h3M7.500 20.500h10M17.500 19v4M7.500 17l2-3" stroke="#111" strokeWidth="1.400" /><InkPen x={8} y={3} /></g>,
  curve: <g><path d="M4 19C5 11 9 7 18 5" stroke="#444" strokeWidth="1.200" /><Node x={4} y={19} /><Node x={8} y={9.500} /><Node x={17.500} y={5} /></g>,
  circle: <g><circle cx="12" cy="11.500" r="7.300" stroke="#555" strokeWidth="1.200" /><path d="M12 11.500l4.500-4.500" stroke="#444" /><Node x={12} y={11.500} /></g>,
  ellipse: <g><ellipse cx="12" cy="12" rx="8.500" ry="6.800" stroke="#4a4a4a" strokeWidth="1.500" /><circle cx="12" cy="12" r="2" fill="#aaa" /><circle cx="12" cy="5.800" r="1.500" fill="#bbb" /><circle cx="20" cy="12" r="1" fill="#fff" /></g>,
  rectpen: <g><path d="M2.500 3.500h19v17h-19zM21.500 2v3M1 20.500h2" stroke="#111" strokeWidth="1.200" /><InkPen x={6} y={5.500} /></g>,
  penta: <path d="M12 5l7.500 5.500L17.500 19h-10L4.500 10.500z" stroke="#111" strokeWidth="1.100" />,
  polypen: <g><path d="M10 2.500L2 6l2.500 12 6 4.500 11-8-4-5.500M10 1v4" stroke="#111" strokeWidth="1.400" /><InkPen x={9} y={2} /></g>,
  stamp: <g><path d="M10 4.500q2-3.500 4 0V14q8 0 8 2.500V20H2v-3.500Q2 14 10 14z" fill="#fff" stroke="#1111ee" strokeWidth="1.700" /><path d="M12 6v10.500M6 16.500h12" stroke="#111" /></g>,
  spen: <g><circle cx="12" cy="12" r="11" fill="#fff" stroke="#222" strokeWidth="1.500" /><path d="M16 8c-2-3-8-2-8 1s8 3.500 8 7-6 3.500-8.500 1" stroke="#111" strokeWidth="3.400" /><path d="M16 8c-2-3-8-2-8 1s8 3.500 8 7-6 3.500-8.500 1" stroke="#bbb" strokeWidth=".8" /><InkPen x={12} y={1} /></g>,
  textpen: <g><path d="M3 22l4-13h2l3 13M5 17h6M1.500 22h4M10 22h4M5.500 8.500h3" stroke="#111" strokeWidth="1.500" /><InkPen x={11} y={1} /></g>,
  erase: <g><rect x="2.500" y="3.500" width="15" height="10" stroke="#111" strokeWidth="1.200" /><circle cx="14.500" cy="15.500" r="6" stroke="#111" strokeWidth="1.300" /><path d="M.5.500l23 23M23.500.500L.5 23.500" stroke="#f01010" strokeWidth="1.900" /></g>,
  rotate: <g><path d="M1.500 7l8-5.500 5 6L6 13z" stroke="#111" strokeDasharray="2.500 1.500" strokeWidth="1.300" /><path d="M12 3q9 0 8.500 7" stroke="#111" strokeWidth="1.700" /><path d="M17.500 8.500H23L20.500 13z" fill="#111" /><rect x="11.500" y="14.500" width="11" height="7" fill="#fff" stroke="#1111ee" strokeWidth="1.200" /></g>,
  move: <g><path d="M1.500 3.500h11v7h-11z" stroke="#111" strokeDasharray="2.500 1.500" strokeWidth="1.200" /><path d="M13 5.500q6 0 6 5" stroke="#111" strokeWidth="1.300" /><path d="M16.500 9h5L19 13z" fill="#111" /><rect x="11.500" y="14.500" width="11" height="7" fill="#fff" stroke="#1111ee" strokeWidth="1.200" /></g>,
  scale: <g><rect x=".5" y=".5" width="23" height="23" stroke="#1111ee" strokeWidth="1.200" /><path d="M1 13.500h10V23" stroke="#111" strokeDasharray="4 2" strokeWidth="1.300" /><path d="M12 13l6-6" stroke="#111" strokeWidth="1.800" /><path d="M14.500 4.500H20V10z" fill="#111" /></g>,
  copyobj: <g><rect x="1.500" y="2.500" width="9" height="7" stroke="#111" strokeWidth="1.200" /><path d="M12 4.500q7 0 7 4.500" stroke="#111" strokeWidth="1.300" /><path d="M16.500 8h5L19 12z" fill="#111" /><rect x="9.500" y="12.500" width="9" height="7" fill="#fff" stroke="#1111ee" strokeWidth="1.200" /><rect x="13.500" y="15.500" width="9" height="7" fill="#fff" stroke="#1111ee" strokeWidth="1.200" /></g>,
  array: <g stroke="#79a7c7" strokeWidth="1.100"><rect x="1.500" y="1.500" width="9" height="9" fill="#d9dde2" stroke="#99a" /><rect x="13.500" y="1.500" width="9" height="9" fill="#b3d8f2" /><rect x="1.500" y="13.500" width="9" height="9" fill="#b3d8f2" /><rect x="13.500" y="13.500" width="9" height="9" fill="#b3d8f2" /></g>,
  zig: <g strokeWidth="1.500"><path d="M7.500 1.500l-3 3 2.500 5-3.500 6 3.500 5.500" stroke="#222" /><path d="M17.500 1.500l-3 3 4.500 5.500-4.500 6 3 5" stroke="#1818ee" /></g>,
  extend: <g><path d="M1 22.500l10-9M14 1l9.500 9" stroke="#111" strokeWidth="2" /><path d="M11 13.500l7-7.500" stroke="#1111ee" strokeWidth="2" strokeDasharray="2 1" /></g>,
  trim: <g><path d="M6.500 2v20M17.500 2v20M1 4.500h5M1 18.500h5M18 4.500h5M18 18.500h5" stroke="#222" strokeWidth="1.200" /><path d="M7 4.500h10M7 18.500h10" stroke="#e22" strokeWidth="1.200" strokeDasharray="2 1.500" /></g>,
  mirror: <g><path d="M10.500 3.500v17h-7z" stroke="#222" strokeWidth="1.100" /><path d="M13.500 3.500v17h7z" stroke="#3322ee" strokeWidth="1.100" /></g>,
  stretch: <g><path d="M1 21L6 6.500h12.500L23 21" stroke="#1111ee" strokeWidth="1.400" /><path d="M1 21Q5 13 12 13t11 8" stroke="#111" strokeWidth="1.200" strokeDasharray="2.500 1.500" /><path d="M15 1q-3 1-2.500 5M10 3.500l2.500 3L15 4" stroke="#111" strokeWidth="1.200" /></g>,
  segment: <g><path d="M5 19L18 6" stroke="#4444dd" strokeDasharray="2 1.200" /><Node x={4.500} y={19.500} /><Node x={17.500} y={5.500} /></g>,
  nodesn: <g><path d="M1 20L14 6l5-5M14 6l7 5M6 14l6 6" stroke="#111" strokeWidth="1.600" /><rect x="3.500" y="12" width="5" height="5" fill="#4040ff" /><rect x="11.500" y="3.500" width="5" height="5" fill="#4040ff" /><path d="M15.500 22.500v-8M15.500 17q1-2.300 3.300-2t2.200 3v4.500" stroke="#111" strokeWidth="2.200" /></g>,
  nodes: <g><path d="M2 20L14 7l5-5M14 7l6 5M6 14.500l5.500 5" stroke="#111" strokeWidth="1.600" /><rect x="4" y="12" width="5" height="5" fill="#4040ff" /><rect x="12" y="4" width="5" height="5" fill="#4040ff" /></g>,
  bend: <g><path d="M1.500 16.500L9 5.500h6" stroke="#111" strokeWidth="2" /><path d="M15 6l6.500 16" stroke="#4848ff" strokeWidth="2" strokeDasharray="5 2" /></g>,
  axisx: <g><path d="M2.500 2.500v8M1 5l1.500-2.500L4 5M12 20.500h8M18 18.500l2.500 2-2.500 2M12.500 18V6" stroke="#111" strokeWidth="1.200" strokeDasharray="6 1" /><path d="M3 11l9.500 9" stroke="#1111ee" strokeWidth="1.700" /><path d="M10 1l5 5m0-5l-5 5" stroke="#f11" /></g>,
  editbox: <g><path d="M1 10.500L11 1.500M1 10.500l12 12 9.500-9-3-4M6.500 10.500l6 7 5.500-5M6.500 10.500l4.500-4.500" stroke="#111" strokeWidth="1.300" /><InkPen x={10} y={2} /></g>,
  fillet: <g><path d="M0 3h11M21 14v9" stroke="#111" strokeWidth="1.800" /><path d="M12 3q9 0 9 11" stroke="#1111ff" strokeWidth="1.800" /></g>,
  chain: <g><circle cx="8" cy="12" r="3" fill="#f4ee81" stroke="#222" strokeWidth="1.200" /><circle cx="16.500" cy="12" r="3" fill="#f4ee81" stroke="#222" strokeWidth="1.200" /><path d="M7 12h11" stroke="#222" strokeWidth="2.600" /><path d="M8 12h9" stroke="#fff" /></g>,
  unchain: <g><circle cx="8" cy="12" r="3" fill="#f4ee81" stroke="#222" /><circle cx="16.500" cy="12" r="3" fill="#f4ee81" stroke="#222" /><path d="M7 12h10" stroke="#222" strokeWidth="2" /><path d="M1 1l22 22M23 1L1 23" stroke="#e81010" strokeWidth="2" /></g>,
  wrench: <g><path d="M10 11l8 8" stroke="#7d6a1a" strokeWidth="4.200" /><path d="M10.500 11.500l7.500 7.500" stroke="#eedd8e" strokeWidth="2.600" /><path d="M4.500 7l3 1 1-4q4 .5 4.500 4.500l-3 3q-4 0-5.500-4.500z" fill="#ddd" stroke="#666" /></g>,
  checkbox: <g><rect x="4.500" y="6.500" width="12" height="11" fill="#f3f6f8" stroke="#7e8c96" strokeWidth="1.200" /><path d="M8 11l3.500 3.500 7.500-8" stroke="#239a22" strokeWidth="2.300" /></g>,

  brush: <g><path d="M1 9l9-2 6 6-8 8q-4-1-7-12z" fill="#e8622d" /><path d="M3 12l6-4 6 6-5 5q-4-1-7-7z" fill="#f3cf3a" /><path d="M1 9l7-2 1 3-6 3z" fill="#e9573a" /><path d="M3 13l4 1 2 5-3-1z" fill="#7fb0e8" /><path d="M13 12l9-8" stroke="#a8782f" strokeWidth="4" /></g>,
  group: <g><path d="M5 8H2v14h12v-3" stroke="#888" strokeWidth="1.600" /><rect x="6" y="5" width="12" height="14" fill="#eee" stroke="#888" strokeWidth="1.500" /><path d="M12 1v15" stroke="#4979ae" strokeWidth="2.500" /><rect x="14" y="15" width="8" height="8" fill="#5aa068" /><path d="M18 16.500v5M15.500 19h5" stroke="#fff" strokeWidth="1.400" /></g>,
  eye: <g><path d="M0 11Q11-1 22 11q-11 11-22 0z" fill="#fff" stroke="#777" strokeWidth="1.500" /><circle cx="11" cy="11" r="4.800" fill="#6d9bd0" stroke="#345" /><circle cx="11" cy="11" r="1.900" fill="#123" /><path d="M14 18h10l-5 5z" fill="#555" /></g>,
  funnel: <g><path d="M2 5h20l-7 8v9l-5 1V13z" fill="#6c9ad0" stroke="#3c6ba3" /><path d="M1.500 1.500h21v4h-21z" fill="#f3df45" stroke="#a49220" /></g>,
  epsilon: <g><path d="M11 3.500Q9 1 6 1.500 2.500 2 3 4.500 3.500 7 8 7 2 7 2 10.500 2.500 14 6.500 14 10 14 11.500 11.500" stroke="#7a4e82" strokeWidth="2.600" /><path d="M13 13h10v10h-2.500v-7h-5v7H13z" fill="#bbb" stroke="#999" /></g>,
  expand: <g><path d="M2 3h8M4 3v16h5M4 11h5" stroke="#888" strokeWidth="1.400" /><path d="M8 8h5v5H8zM8 16h5v5H8z" fill="#fff" stroke="#ed971b" strokeWidth="1.700" /><path d="M14 2h6v12h4l-7 9-7-9h4z" fill="#4f83bd" stroke="#2c5a90" /></g>,
  collapse: <g><path d="M2 3h8M4 3v16h5M4 11h5" stroke="#888" strokeWidth="1.400" /><path d="M8 8h5v5H8zM8 16h5v5H8z" fill="#fff" stroke="#ed971b" strokeWidth="1.700" /><path d="M14 22h6V11h4l-7-9-7 9h4z" fill="#4f83bd" stroke="#2c5a90" /></g>,
  remove: <g><rect x="1" y="2" width="18" height="18" fill="#f3f3f3" stroke="#888" strokeWidth="1.600" /><rect x="13" y="14" width="10.500" height="9.500" rx="3" fill="#e34a53" /><path d="M15 18.700h6.500" stroke="#fff" strokeWidth="2.200" /></g>,
};

const QLogo = () => (
  <svg width="16" height="16" viewBox="0 0 16 16" fill="none">
    <circle cx="7.700" cy="7.500" r="5.800" stroke="#83b135" strokeWidth="3.400" />
    <path d="M9 9l5 6" stroke="#f6f8f2" strokeWidth="4.400" />
    <path d="M8.500 9h3.500l4 6.500h-3.800z" fill="#679a37" /><circle cx="8" cy="7.800" r="1.700" fill="#e98d2d" />
  </svg>
);
const T = ({ i, ...rest }) => <Tool {...rest}><Svg>{icons[i]}</Svg></Tool>;
const Many = ({ of, dim }) => of.split(" ").map((n, k) => <T key={n + k} i={n} $dim={dim} />);
const G = ({ l, w }) => <Grip $l={l} $w={w}><GripDots /></Grip>;

const FloatClose = ({ r }) => (
  <DockButtons $r={r}>
    <svg width="11" height="11" viewBox="0 0 11 11" fill="none" stroke="#666"><rect x=".5" y=".5" width="10" height="10" rx="2" /><path d="M4.500 2.500h4v4h-4zM2.500 4.500h4v4h-4z" fill="#eee" strokeWidth=".9" /></svg>
    <svg width="11" height="11" viewBox="0 0 11 11" fill="none" stroke="#666"><rect x=".5" y=".5" width="10" height="10" rx="2" /><path d="M3 3l5 5M8 3L3 8" stroke="#444" strokeWidth="2" /></svg>
  </DockButtons>
);
const Tick = () => <svg width="10" height="11" viewBox="0 0 10 11" fill="none"><path d="M1.500 5l2.500 4L8.500 1" stroke="#000" strokeWidth="1.800" /></svg>;
const CloseX = () => <svg width="13" height="12" viewBox="0 0 13 12" fill="none"><path d="M2 1l9 10" stroke="#222" strokeWidth="2.400" /><path d="M12 .5Q6 4 1 11.500" stroke="#222" strokeWidth="1.800" /></svg>;

/* ---------- map contents ---------- */
const east = [162,393,201,387,190,407,223,409,144,424,162,425,186,429,237,427,248,443,262,447,140,462,165,450,182,460,212,467,240,463,176,481,192,480,237,489,257,486,143,498,205,503,135,508,218,510,258,503,183,510,246,520,273,519,153,525,200,526,282,535,230,538,295,546,152,555,212,543,177,563,248,549,267,555,202,563,165,579,198,584,228,580,246,594,308,567,320,576,272,583,284,597,321,600,305,607,163,603,213,608,140,600,252,616,325,630,309,648,307,639,222,635,135,630,195,648,147,648,267,645,264,675,243,662,210,658,183,669,150,675,167,688,198,703,219,702,248,708,138,708,162,711,237,713,147,741,128,748,198,733,218,733,181,750,231,748,228,761,204,750,70,750,75,765,67,773,39,788,36,800,64,804];
const south = [840,620,862,618,912,624,885,640,920,640,897,642,829,658,819,671,842,674,862,662,912,678,852,699,838,698,870,690,884,705,910,698,927,702,937,652,960,676,960,650,1000,664,985,672,975,695,973,707,975,720,1002,620,1007,633,1026,620,1050,640,1032,667,1032,684,1048,682,1062,682,1077,660,1110,650,1120,628,1095,635,1145,615,1140,645,1163,625,1170,648,1085,675,1120,680,1128,668,1099,686,1279,620,1290,635,1279,643,1249,658,1247,671,1277,671];
const lone = [1083,726,1106,749,1092,768,1116,768,1163,820,865,48,905,46,891,40];
const pairs = (a, ox, oy) => a.reduce((r, v, k) => (k % 2 ? r : [...r, [ox + v / 3, oy + a[k + 1] / 3]]), []);
const clustered = [...pairs(east, 860, 196), ...pairs(south, 456, 240)];

/* Points between close neighbours, drawn beneath, thicken each cluster. */
const between = clustered.flatMap(([x, y], k) =>
  clustered.slice(k + 1).flatMap(([u, v], j) => {
    const d = Math.hypot(u - x, v - y);
    if (d < 4 || d > 12) return [];
    const t = 0.2 + ((k + j) % 3) * 0.1;
    return [t, 1 - t].map((s) => [x + (u - x) * s, y + (v - y) * s]);
  })
);
const points = [...between, ...clustered, ...pairs(lone, 456, 240)];

const MapCanvas = () => (
  <svg width="1053" height="329" viewBox="312 200 1053 329" fill="none">
    <g stroke="#2b2b22" strokeWidth="1.100">
      <path d="M1038.700 200L983 343l-3 8q-2 2-5 5l-1.700 3-.6 7 .6 6.500-4 4-7.500 1.800" />
      <path d="M928 451v7q-3 4-7 6l-13 7q-7 4-7.300 11l5 9.500 6.500 11q4 7 3.500 18l-5 6.500-7.500 1.500" />
      <path d="M1354 200l11 26" />
    </g>
    <g fill="#b9ae91" stroke="#35332b" strokeWidth="1.200">
      {points.map(([x, y], k) => <circle key={k} cx={x} cy={y} r="3.800" />)}
    </g>
  </svg>
);

const menu = [
  ["", "P", "ro", "j", "ect", 51], ["", "E", "dit", "", "", 34], ["", "V", "iew", "", "", 39], ["", "L", "ayer", "", "", 42],
  ["", "S", "ettings", "", "", 56], ["", "P", "lugins", "", "", 53], ["Vect", "o", "r", "", "", 47], ["", "R", "aster", "", "", 46],
  ["", "D", "atabase", "", "", 62], ["", "W", "eb", "", "", 38], ["", "M", "esh", "", "", 43], ["SCP", "", "", "", "", 35],
  ["Pro", "c", "essing", "", "", 71], ["", "H", "elp", "", "", 40],
];

export default function App() {
  return (
    <Window>
      <GlobalStyle />
      <TitleBar>
        <AppIcon><QLogo /></AppIcon>*Untitled Project — QGIS
        <WindowButtons>
          <svg width="11" height="11"><path d="M0 5.500h11" stroke="#888" /></svg>
          <svg width="11" height="11" fill="none" stroke="#888"><path d="M.5 2.500h8v8h-8zM2.500 2.500v-2h8v8h-2" /></svg>
          <svg width="11" height="11"><path d="M.5.500l10 10M10.500.500l-10 10" stroke="#888" /></svg>
        </WindowButtons>
      </TitleBar>
      <MenuBar>
        {menu.map(([a, b, c, d, e, w], k) => (
          <MenuItem key={k} $w={w}>{a}{k === 0 ? b : <u>{b}</u>}{c}<u>{d}</u>{e}</MenuItem>
        ))}
      </MenuBar>

      <Toolbar>
        <G /><Many of="new open save layout layouts style" /><G l={9} w={17} />
        <T i="hand" $on /><Many of="pan zin zout zfull zsel zlay" /><Many of="zone" dim /><Many of="zlast" /><Many of="znext" dim />
        <Many of="newmap new3d bookm books clock refresh" /><G l={8} w={15} />
        <Many of="info table abacus gear sigma ruler" /><Drop /><T i="tip" $on /><Many of="gearplay" dim /><Drop $dim /><Many of="textann" /><Drop />
        <G l={9} w={17} /><Many of="raster" />
        <Field $w={60}><FieldText>0</FieldText><Spin /></Field><T i="land" $w={34} />
        <Field $w={60} $pl={5}><FieldText>1</FieldText><Spin /></Field><T i="land" $w={34} />
        <More $w={25} $l={7}>»</More>
      </Toolbar>

      <Toolbar>
        <G /><Many of="addlayer gpkg vee feather chip" /><Divider /><Many of="veebox" /><Divider /><G l={9} w={17} />
        <Many of="pens" dim /><Many of="pen" /><Many of="savepen dotstar vertex" dim /><Drop $dim />
        <Many of="rowspen trash cut copy paste undo redo" dim /><G l={8} w={15} />
        <Many of="abc pie" /><Divider /><Many of="abpin abred" /><Divider /><Many of="abpin2 abeye abmove abturn abedit" dim />
        <G l={9} w={17} /><Many of="search" /><G l={8} w={16} /><Many of="python hammer turn" /><Drop /><Many of="plug plug" />
        <G l={8} w={16} /><Many of="manual" /><G l={8} w={16} />
      </Toolbar>

      <Toolbar>
        <G /><Many dim of="arcdash triangle dotmove" /><Drop $dim />
        <Many dim of="blobturn merge ring part fillr ringx partx reshape offset vsplit split4 cutblob cutblob mergeb lines rotsym" /><Drop $dim />
        <G l={9} w={17} /><Many of="scp scplens" />
        <DarkLabel $w={59} $mr={1}><Bullet />RGB =</DarkLabel><Field $w={80} $h={22} $mr={1}>-<Arrow /></Field>
        <Many of="histp hists lensplus" /><DarkLabel $w={59}><Bullet />ROI</DarkLabel><Many of="roi plus redoroi" />
        <DarkLabel $w={25} $bold $mr={41}>Dist</DarkLabel><More $w={19} $l={3}>»</More><G l={5} w={13} />
        <Many of="width" /><More $w={14}>»</More><G l={7} w={15} /><Many of="select" /><Drop /><More $w={14}>»</More>
      </Toolbar>

      <Toolbar $h={38}>
        <G /><Many of="ball help slabok slabpen" /><Many dim of="undo2 redo" /><Many of="linepen plpen curve" /><Drop /><Many of="circle" /><Drop />
        <Many of="ellipse" /><Drop /><Many of="rectpen penta polypen stamp spen textpen erase rotate move scale copyobj array" /><Drop />
        <Many of="zig extend trim mirror stretch segment nodesn nodes bend" /><Drop /><Many of="axisx editbox fillet chain unchain wrench checkbox" />
      </Toolbar>

      <Workspace>
        <LayersDock>
          <DockTitle>Layers<FloatClose r={2} /></DockTitle>
          <LayerTools>
            {["brush", "group", "eye", "funnel", "epsilon"].map((n) => <Tool key={n} $w={25}><Svg s={16}>{icons[n]}</Svg></Tool>)}
            <Drop />
            {["expand", "collapse", "remove"].map((n) => <Tool key={n} $w={25}><Svg s={16}>{icons[n]}</Svg></Tool>)}
          </LayerTools>
          <Tree>
            <TreeRow $hot $ls={-0.24}><Check><Tick /></Check><Symbol><PointMark /></Symbol>connectionsReadytoUpload</TreeRow>
            <TreeRow $ls={-0.3}><Check><Tick /></Check><Symbol><Swatch /></Symbol>County</TreeRow>
          </Tree>
        </LayersDock>
        <Splitter />
        <Center>
          <MapPane><MapCanvas /></MapPane>
          <HSplit />
          <BottomDocks>
            <LogDock>
              <DockTitle $h={19}>Log Messages<FloatClose r={2} /></DockTitle>
              <Tabs>
                <Tab $w={81}>Plugins<CloseX /></Tab>
                <Tab $w={95} $active>Messages<CloseX /></Tab>
              </Tabs>
              <LogBox><LogInner>
                <LogPart $w={120}>2021-07-08T22:26:42</LogPart><LogPart $w={58} $ls={-0.1}>SUCCESS</LogPart>
                <LogPart $w={111} $bold $ls={-0.45}>validate_geometry</LogPart><LogPart $ls={-0.1}>reloaded.</LogPart>
              </LogInner></LogBox>
            </LogDock>
            <Splitter />
            <QadDock>
              <DockTitle $h={20} $pb={1}>QAD text wi...<FloatClose r={2} /></DockTitle>
              <QadOutput /><QadInput>Command:</QadInput>
            </QadDock>
          </BottomDocks>
        </Center>
      </Workspace>

      <StatusBar>
        <Locator $w={200} $h={22}>
          <svg width="13" height="13" fill="none" stroke="#777" strokeWidth="1.300"><circle cx="5" cy="5" r="4" /><path d="M8 8l4 4" /></svg>
          <FieldText>Type to locate (Ctrl+K)</FieldText>
        </Locator>
        <Gap $w={363} />
        <StatusCell $w={57} $ls={-0.1}>Coordinate</StatusCell>
        <Field $w={97} $h={22} $pl={6}><FieldText>37.1659,-0.5204</FieldText></Field>
        <StatusCell $w={32}>
          <Gap $w={5} />
          <svg width="15" height="16" viewBox="0 0 15 16" fill="none" stroke="#333"><path d="M1 2l8 9M4 1l7 8M1 6l6 7M10 5l4-4M1 2q1-2 3-1" strokeWidth="1.500" /><circle cx="10" cy="11" r="3.800" fill="#ddd" strokeWidth="1.300" /><circle cx="10" cy="11" r="1.200" /></svg>
        </StatusCell>
        <StatusCell $w={29} $ls={-0.2}>Scale</StatusCell>
        <Field $w={80} $h={22}><FieldText>1:211809</FieldText><Arrow /></Field>
        <StatusCell $w={33}>
          <Gap $w={13} />
          <svg width="12" height="16" viewBox="0 0 12 16" fill="none"><path d="M2.500 8V4.500q0-3.500 3.500-3.500t3.500 3.500V8" stroke="#888" strokeWidth="1.600" /><rect x="0" y="7.500" width="12" height="8" rx="1" fill="#555" /></svg>
        </StatusCell>
        <StatusCell $w={48} $ls={-0.25}>Magnifier</StatusCell>
        <Field $w={88} $h={21} $mr={8}><FieldText>100%</FieldText><Spin /></Field>
        <StatusCell $w={51}>Rotation</StatusCell>
        <Field $w={84} $h={21} $mr={6}><FieldText>0.0 °</FieldText><Spin /></Field>
        <Check><Tick /></Check>
        <Gap $w={4} />
        <StatusCell $w={54}>Render</StatusCell>
        <StatusCell $w={18}>
          <svg width="15" height="15" viewBox="0 0 15 15" fill="none" stroke="#777" strokeWidth=".9"><circle cx="7.500" cy="7.500" r="6" fill="#b5b5b5" /><path d="M0 7.500h15M7.500 0v15M3 4.500h9M3 10.500h9M7.500 2q-6 5.500 0 11 6-5.500 0-11" /></svg>
        </StatusCell>
        <StatusCell $w={68} $ls={-0.1}>EPSG:4326</StatusCell>
        <Bubble><svg width="18" height="17" viewBox="0 0 18 17"><path d="M9 1c5 0 8 3 8 6.500 0 3-2 5-4 5.500l1 3.500-4.500-3C4 13.500 1 11 1 7.500S4 1 9 1z" fill="#666" /></svg></Bubble>
      </StatusBar>

      <Dialog>
        <DialogTitle>
          <DialogCaption><QLogo />Validate Geometry</DialogCaption>
          <svg width="12" height="12"><path d="M1 1l10 10M11 1L1 11" stroke="#000" strokeWidth="1.100" /></svg>
        </DialogTitle>
        <DialogRow>
          <InputLabel>Input Layer</InputLabel>
          <LayerCombo $w={291} $h={22}>
            <ComboValue>
              <svg width="17" height="12" viewBox="0 0 17 12"><path d="M1 2q1-2 5-.5Q10 3 13 1q3-1 3.500 2l-.5 5q-2 1-4 0-4-1-5 1-4 3-5.500 1Q-.5 6 1 2z" fill="#e3e3e3" stroke="#8a8a8a" /></svg>
              <FieldText>County</FieldText>
            </ComboValue>
            <Arrow $plain $w={22} />
          </LayerCombo>
        </DialogRow>
        <DialogFooter>
          <Progress>100%</Progress>
          <Button $primary>OK</Button>
          <Button>Cancel</Button>
        </DialogFooter>
      </Dialog>
    </Window>
  );
}
